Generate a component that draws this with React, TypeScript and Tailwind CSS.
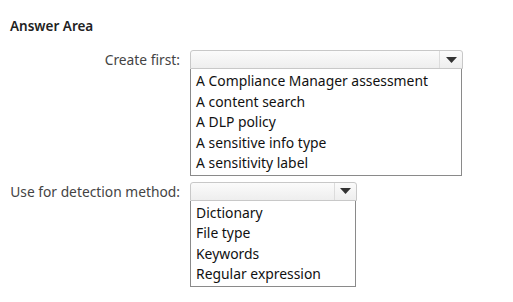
import React from 'react'

const font = { fontFamily: '"Noto Sans", "Open Sans", sans-serif' }

function Dropdown({ width, items, arrowX }: { width: number; items: string[]; arrowX: number }) {
  return (
    <div className="flex flex-col" style={{ width }}>
      <div className="flex h-[19px] rounded-t-[3px] border border-[#c8c8c8] bg-gradient-to-b from-[#fbfbfb] to-[#eeeeee]">
        <div className="flex-1" />
        <div className="flex items-center justify-center border-l border-[#dcdcdc]" style={{ width: arrowX }}>
          <svg width="11" height="6" viewBox="0 0 11 6">
            <path d="M0 0 H11 L5.5 6 Z" fill="#333" />
          </svg>
        </div>
      </div>
      <ul className="mr-[1px] border border-t-0 border-[#8a8a8a] bg-white pt-[2px] pb-[1px] pl-[5px]">
        {items.map((item) => (
          <li key={item} className="h-[20.5px] leading-[20.5px] text-[13.9px] text-[#111]">
            {item}
          </li>
        ))}
      </ul>
    </div>
  )
}

export default function App() {
  return (
    <div className="h-[302px] w-[513px] bg-white pt-[16px] pl-[10px]" style={font}>
      <div className="text-[13.5px] leading-[20px] font-semibold text-[#222]">Answer Area</div>

      <div className="mt-[14px] grid grid-cols-[170px_auto] gap-x-[10px]">
        <div className="whitespace-nowrap text-right text-[13.8px] leading-[20px] text-[#444]">Create first:</div>
        <Dropdown
          width={273}
          arrowX={23}
          items={[
            'A Compliance Manager assessment',
            'A content search',
            'A DLP policy',
            'A sensitive info type',
            'A sensitivity label',
          ]}
        />

        <div className="mt-[6px] -ml-[2px] whitespace-nowrap text-right text-[13.8px] leading-[20px] text-[#444]">
          Use for detection method:
        </div>
        <div className="mt-[6px]">
          <Dropdown
            width={167}
            arrowX={22}
            items={['Dictionary', 'File type', 'Keywords', 'Regular expression']}
          />
        </div>
      </div>
    </div>
  )
}
